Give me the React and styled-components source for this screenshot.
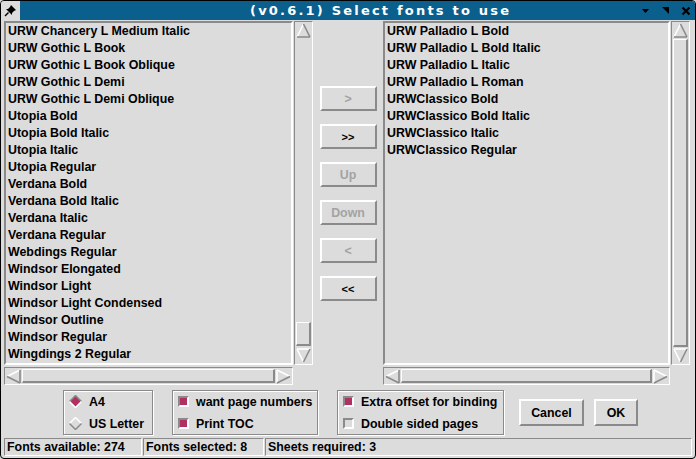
import React from 'react';
import styled, { createGlobalStyle } from 'styled-components';

const GlobalStyle = createGlobalStyle`
  html, body { margin: 0; padding: 0; background: #dcdcdc; }
  body { font-family: "Liberation Sans", Arial, sans-serif; }
`;

const DARK = '#8a8a8a';
const LIGHT = '#ffffff';
const BG = '#dcdcdc';
const MAROON = '#b03060';

const leftFonts = [
  'URW Chancery L Medium Italic',
  'URW Gothic L Book',
  'URW Gothic L Book Oblique',
  'URW Gothic L Demi',
  'URW Gothic L Demi Oblique',
  'Utopia Bold',
  'Utopia Bold Italic',
  'Utopia Italic',
  'Utopia Regular',
  'Verdana Bold',
  'Verdana Bold Italic',
  'Verdana Italic',
  'Verdana Regular',
  'Webdings Regular',
  'Windsor Elongated',
  'Windsor Light',
  'Windsor Light Condensed',
  'Windsor Outline',
  'Windsor Regular',
  'Wingdings 2 Regular',
];

const rightFonts = [
  'URW Palladio L Bold',
  'URW Palladio L Bold Italic',
  'URW Palladio L Italic',
  'URW Palladio L Roman',
  'URWClassico Bold',
  'URWClassico Bold Italic',
  'URWClassico Italic',
  'URWClassico Regular',
];

const Window = styled.div`
  width: 696px;
  height: 459px;
  box-sizing: border-box;
  border: 1px solid #000;
  border-radius: 4px;
  background: ${BG};
  display: flex;
  flex-direction: column;
  overflow: hidden;
  font-family: "Liberation Sans", Arial, sans-serif;
  font-weight: bold;
  font-size: 12.4px;
  color: #000;
`;

const TitleBar = styled.div`
  height: 19px;
  display: flex;
  align-items: center;
  background: #0b5f8c;
  color: #fff;
`;

const PinBox = styled.div`
  width: 19px;
  height: 19px;
  background: ${BG};
  display: flex;
  align-items: center;
  justify-content: center;
`;

const Title = styled.div`
  margin-left: 230px;
  font-family: "DejaVu Sans", sans-serif;
  font-size: 13px;
  letter-spacing: 2.2px;
  font-weight: bold;
  flex: 1;
  white-space: nowrap;
`;

const TitleButtons = styled.div`
  display: flex;
  gap: 7px;
  padding-right: 3px;
`;

const TitleIcon = styled.div`
  width: 13px;
  height: 13px;
  display: flex;
  align-items: center;
  justify-content: center;
`;

const Main = styled.div`
  display: flex;
  padding: 1px 5px 0 3px;
`;

const Pane = styled.div`
  display: flex;
  flex-direction: column;
  gap: 2px;
`;

const ListRow = styled.div`
  display: flex;
  gap: 1px;
  height: 344px;
`;

const ListBox = styled.div`
  width: ${p => p.$width}px;
  box-sizing: border-box;
  border-style: solid;
  border-width: 2px;
  border-color: ${DARK} ${LIGHT} ${LIGHT} ${DARK};
  padding: 0 0 0 2px;
  overflow: hidden;
`;

const ListItem = styled.div`
  height: 17px;
  line-height: 17px;
  white-space: nowrap;
`;

const VScroll = styled.div`
  width: 19px;
  box-sizing: border-box;
  border-style: solid;
  border-width: 1px;
  border-color: ${DARK} ${LIGHT} ${LIGHT} ${DARK};
  display: flex;
  flex-direction: column;
  padding: 1px;
`;

const Trough = styled.div`
  flex: 1;
  display: flex;
  flex-direction: ${p => (p.$horizontal ? 'row' : 'column')};
  justify-content: ${p => (p.$end ? 'flex-end' : 'flex-start')};
  padding: ${p => (p.$horizontal ? '0 1px' : '1px 0')};
`;

const Thumb = styled.div`
  box-sizing: border-box;
  border-style: solid;
  border-width: 1px 2px 2px 1px;
  border-color: ${LIGHT} ${DARK} ${DARK} ${LIGHT};
  ${p => (p.$size ? `height: ${p.$size}px; margin-bottom: 1px;` : 'flex: 1;')}
`;

const HScroll = styled.div`
  width: ${p => p.$width}px;
  height: 18px;
  box-sizing: border-box;
  border-style: solid;
  border-width: 1px;
  border-color: ${DARK} ${LIGHT} ${LIGHT} ${DARK};
  display: flex;
  padding: 1px;
`;

const Arrow = styled.div`
  width: 15px;
  height: 15px;
  flex: none;
  display: flex;
`;

const ButtonColumn = styled.div`
  width: 73px;
  display: flex;
  flex-direction: column;
  align-items: center;
  gap: 13px;
  padding-top: 65px;
`;

const TkButton = styled.div`
  width: ${p => p.$width || 57}px;
  height: ${p => p.$height || 25}px;
  box-sizing: border-box;
  border-style: solid;
  border-width: 2px;
  border-color: ${LIGHT} ${DARK} ${DARK} ${LIGHT};
  display: flex;
  align-items: center;
  justify-content: center;
  color: ${p => (p.$disabled ? '#a3a3a3' : '#000')};
  font-size: ${p => p.$small || 12.4}px;
`;

const Options = styled.div`
  display: flex;
  align-items: center;
  padding-left: 62px;
  margin-top: 5px;
  height: 45px;
`;

const Group = styled.div`
  width: ${p => p.$width}px;
  height: 45px;
  box-sizing: border-box;
  border: 1px solid ${DARK};
  box-shadow: inset 1px 1px 0 ${LIGHT}, 1px 1px 0 ${LIGHT};
  margin-right: ${p => p.$gap || 0}px;
  display: flex;
  flex-direction: column;
  justify-content: center;
  gap: 5px;
  padding-left: 5px;
`;

const OptionRow = styled.div`
  display: flex;
  align-items: center;
  gap: 7px;
  height: 17px;
  white-space: nowrap;
`;

const Check = styled.div`
  width: 11px;
  height: 11px;
  box-sizing: border-box;
  border-style: solid;
  border-width: 2px;
  border-color: ${DARK} ${LIGHT} ${LIGHT} ${DARK};
  background: ${p => (p.$on ? MAROON : BG)};
`;

const Spacer = styled.div`
  width: ${p => p.$width}px;
`;

const StatusBar = styled.div`
  display: flex;
  margin: 3px 2px 0 3px;
  height: 18px;
`;

const StatusCell = styled.div`
  width: ${p => (p.$width ? `${p.$width}px` : 'auto')};
  flex: ${p => (p.$width ? 'none' : 1)};
  box-sizing: border-box;
  border-style: solid;
  border-width: 1px;
  border-color: ${DARK} ${LIGHT} ${LIGHT} ${DARK};
  padding-left: 2px;
  line-height: 16px;
  margin-right: 1px;
  white-space: nowrap;
`;

const ArrowIcon = ({ dir }) => {
  const shapes = {
    up: [['1,14 7.5,1', LIGHT], ['7.5,1 14,14', DARK], ['1,14 14,14', DARK]],
    down: [['1,1 14,1', LIGHT], ['1,1 7.5,14', LIGHT], ['7.5,14 14,1', DARK]],
    left: [['14,1 1,7.5', LIGHT], ['1,7.5 14,14', DARK], ['14,1 14,14', DARK]],
    right: [['1,1 14,7.5', LIGHT], ['1,1 1,14', LIGHT], ['14,7.5 1,14', DARK]],
  };
  return (
    <svg width="15" height="15" viewBox="0 0 15 15">
      {shapes[dir].map(([pts, c], i) => (
        <polyline key={i} points={pts} fill="none" stroke={c} strokeWidth="1.6" />
      ))}
    </svg>
  );
};

const VScrollBar = ({ thumb }) => (
  <VScroll>
    <Arrow><ArrowIcon dir="up" /></Arrow>
    <Trough $end={!!thumb}>
      <Thumb $size={thumb} />
    </Trough>
    <Arrow><ArrowIcon dir="down" /></Arrow>
  </VScroll>
);

const HScrollBar = ({ width }) => (
  <HScroll $width={width}>
    <Arrow><ArrowIcon dir="left" /></Arrow>
    <Trough $horizontal>
      <Thumb />
    </Trough>
    <Arrow><ArrowIcon dir="right" /></Arrow>
  </HScroll>
);

const Radio = ({ on }) => (
  <svg width="13" height="13" viewBox="0 0 13 13">
    <polygon points="6.5,0.5 12.5,6.5 6.5,12.5 0.5,6.5" fill={on ? MAROON : BG} />
    <polyline points="0.5,6.5 6.5,0.5 12.5,6.5" fill="none" stroke={on ? DARK : LIGHT} strokeWidth="1.5" />
    <polyline points="0.5,6.5 6.5,12.5 12.5,6.5" fill="none" stroke={on ? LIGHT : DARK} strokeWidth="1.5" />
  </svg>
);

const FontList = ({ items, width, thumb }) => (
  <Pane>
    <ListRow>
      <ListBox $width={width}>
        {items.map(f => <ListItem key={f}>{f}</ListItem>)}
      </ListBox>
      <VScrollBar thumb={thumb} />
    </ListRow>
    <HScrollBar width={width} />
  </Pane>
);

export default function App() {
  return (
    <>
      <GlobalStyle />
      <Window>
        <TitleBar>
          <PinBox>
            <svg width="13" height="13" viewBox="0 0 13 13">
              <path d="M7 1 L12 6 L10 7 L8 9 L8 11 L2 5 L4 5 L6 3 Z" fill="#000" />
              <path d="M4.5 8.5 L1 12" stroke="#000" strokeWidth="1.5" />
            </svg>
          </PinBox>
          <Title>(v0.6.1) Select fonts to use</Title>
          <TitleButtons>
            <TitleIcon>
              <svg width="9" height="9" viewBox="0 0 9 9"><polygon points="1,3 8,3 4.5,7" fill="#000" /></svg>
            </TitleIcon>
            <TitleIcon>
              <svg width="9" height="9" viewBox="0 0 9 9"><polygon points="1,1 8,1 8,8" fill="#000" /></svg>
            </TitleIcon>
            <TitleIcon>
              <svg width="10" height="10" viewBox="0 0 10 10">
                <path d="M1.5 1.5 L8.5 8.5 M8.5 1.5 L1.5 8.5" stroke="#000" strokeWidth="2.2" />
              </svg>
            </TitleIcon>
          </TitleButtons>
        </TitleBar>

        <Main>
          <FontList items={leftFonts} width={289} thumb={24} />
          <ButtonColumn>
            <TkButton $disabled>&gt;</TkButton>
            <TkButton $small={11}>&gt;&gt;</TkButton>
            <TkButton $disabled>Up</TkButton>
            <TkButton $disabled>Down</TkButton>
            <TkButton $disabled>&lt;</TkButton>
            <TkButton $small={11}>&lt;&lt;</TkButton>
          </ButtonColumn>
          <FontList items={rightFonts} width={287} />
        </Main>

        <Options>
          <Group $width={90} $gap={19}>
            <OptionRow><Radio on /><span>A4</span></OptionRow>
            <OptionRow><Radio /><span>US Letter</span></OptionRow>
          </Group>
          <Group $width={146} $gap={19}>
            <OptionRow><Check $on /><span>want page numbers</span></OptionRow>
            <OptionRow><Check $on /><span>Print TOC</span></OptionRow>
          </Group>
          <Group $width={167} $gap={15}>
            <OptionRow><Check $on /><span>Extra offset for binding</span></OptionRow>
            <OptionRow><Check /><span>Double sided pages</span></OptionRow>
          </Group>
          <TkButton $width={65} $height={27}>Cancel</TkButton>
          <Spacer $width={10} />
          <TkButton $width={44} $height={27}>OK</TkButton>
        </Options>

        <StatusBar>
          <StatusCell $width={138}>Fonts available: 274</StatusCell>
          <StatusCell $width={121}>Fonts selected: 8</StatusCell>
          <StatusCell>Sheets required: 3</StatusCell>
        </StatusBar>
      </Window>
    </>
  );
}
